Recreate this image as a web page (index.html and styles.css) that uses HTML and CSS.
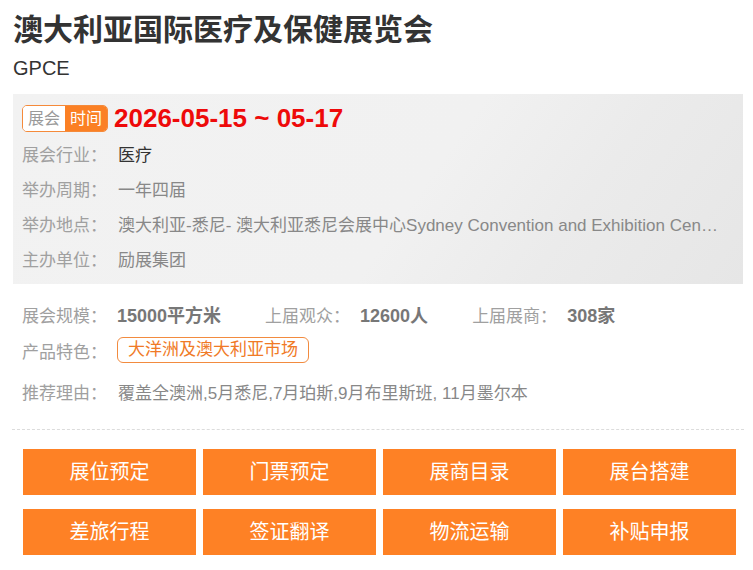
FILE: index.html
```html
<!DOCTYPE html>
<html lang="zh-CN">
  <head>
    <meta charset="UTF-8" />
    <meta name="viewport" content="width=device-width, initial-scale=1.0" />
    <title>澳大利亚国际医疗及保健展览会</title>
    <link rel="stylesheet" href="styles.css">
  </head>
  <body>
    <div class="expo">
      <h1 class="expo-title">澳大利亚国际医疗及保健展览会</h1>
      <div class="expo-sub">GPCE</div>

      <!-- 基本信息 -->
      <div class="info-box">
        <div class="date-row">
          <span class="date-badge"><span class="badge-l">展会</span><span class="badge-r">时间</span></span>
          <span class="date-text">2026-05-15 ~ 05-17</span>
        </div>
        <div class="info-row">
          <span class="label">展会行业：</span>
          <span class="value dark">医疗</span>
        </div>
        <div class="info-row">
          <span class="label">举办周期：</span>
          <span class="value">一年四届</span>
        </div>
        <div class="info-row">
          <span class="label">举办地点：</span>
          <span class="value">澳大利亚-悉尼- 澳大利亚悉尼会展中心Sydney Convention and Exhibition Centre (ICC Sydney)</span>
        </div>
        <div class="info-row">
          <span class="label">主办单位：</span>
          <span class="value">励展集团</span>
        </div>
      </div>

      <!-- 规模数据 -->
      <div class="stats">
        <div class="stat-row">
          <div class="stat"><span class="label">展会规模：</span><b>15000平方米</b></div>
          <div class="stat"><span class="label">上届观众：</span><b>12600人</b></div>
          <div class="stat"><span class="label">上届展商：</span><b>308家</b></div>
        </div>
        <div class="stat-row">
          <span class="label">产品特色：</span>
          <span class="tag">大洋洲及澳大利亚市场</span>
        </div>
        <div class="stat-row reason">
          <span class="label">推荐理由：</span>
          <span class="value">覆盖全澳洲,5月悉尼,7月珀斯,9月布里斯班, 11月墨尔本</span>
        </div>
      </div>

      <div class="actions">
        <a href="#" class="btn">展位预定</a>
        <a href="#" class="btn">门票预定</a>
        <a href="#" class="btn">展商目录</a>
        <a href="#" class="btn">展台搭建</a>
        <a href="#" class="btn">差旅行程</a>
        <a href="#" class="btn">签证翻译</a>
        <a href="#" class="btn">物流运输</a>
        <a href="#" class="btn">补贴申报</a>
      </div>
    </div>
  </body>
</html>
```

FILE: styles.css
```css
body,
html {
  margin: 0;
  padding: 0;
  background: #fff;
}

body {
  font-family: "Liberation Sans", "Noto Sans CJK SC", sans-serif;
  color: #333;
}

.expo {
  width: 730px;
  padding: 10px 10px 0 13px;
}

.expo-title {
  margin: 0;
  font-size: 30px;
  line-height: 40px;
  font-weight: bold;
  color: #333;
}

.expo-sub {
  margin-top: 3px;
  font-size: 20px;
  line-height: 30px;
  color: #333;
}

.info-box {
  margin-top: 11px;
  padding: 6px 22px 6px 9px;
  background-color: #eee;
  background-image: linear-gradient(125deg, #f2f2f2 0%, #f1f1f1 55%, #ebebeb 75%, #e6e6e6 100%);
}

.date-row {
  display: flex;
  align-items: center;
  height: 36px;
  margin-bottom: 2px;
}

.date-badge {
  display: flex;
  border: 1px solid #f58a3a;
  border-radius: 5px;
  overflow: hidden;
  font-size: 16px;
  line-height: 25px;
}

.badge-l {
  padding: 0 5px;
  background: #fff;
  color: #999;
}

.badge-r {
  padding: 0 5px;
  background: #fb8024;
  color: #fff;
}

.date-text {
  margin-left: 6px;
  font-size: 26px;
  font-weight: bold;
  color: #ee0a0a;
}

.info-row {
  display: flex;
  font-size: 17px;
  line-height: 35px;
}

.label {
  flex: none;
  width: 96px;
  color: #a0a0a0;
  font-size: 17px;
}

.value {
  color: #888;
  white-space: nowrap;
  overflow: hidden;
  text-overflow: ellipsis;
}

.value.dark {
  color: #333;
}

.stats {
  margin-top: 12px;
  padding-left: 9px;
}

.stat-row {
  display: flex;
  align-items: center;
  height: 36px;
  font-size: 17px;
}

.stat-row.reason {
  margin-top: 5px;
}

.stat {
  display: flex;
  align-items: center;
  margin-right: 44px;
}

.stat b {
  font-size: 18px;
  color: #777;
}

.stat .label {
  width: 95px;
}

.tag {
  margin-left: -1px;
  padding: 0 10px;
  border: 1px solid #f28b3f;
  border-radius: 6px;
  line-height: 24px;
  color: #f07a26;
}

.actions {
  display: grid;
  grid-template-columns: repeat(4, 173px);
  column-gap: 7px;
  row-gap: 14px;
  margin: 20px -1px 0 -1px;
  padding: 19px 0 0 11px;
  border-top: 1px dashed #dcdcdc;
}

.btn {
  display: block;
  height: 46px;
  line-height: 46px;
  text-align: center;
  background: #fe8125;
  color: #fff;
  font-size: 20px;
  text-decoration: none;
}
```
